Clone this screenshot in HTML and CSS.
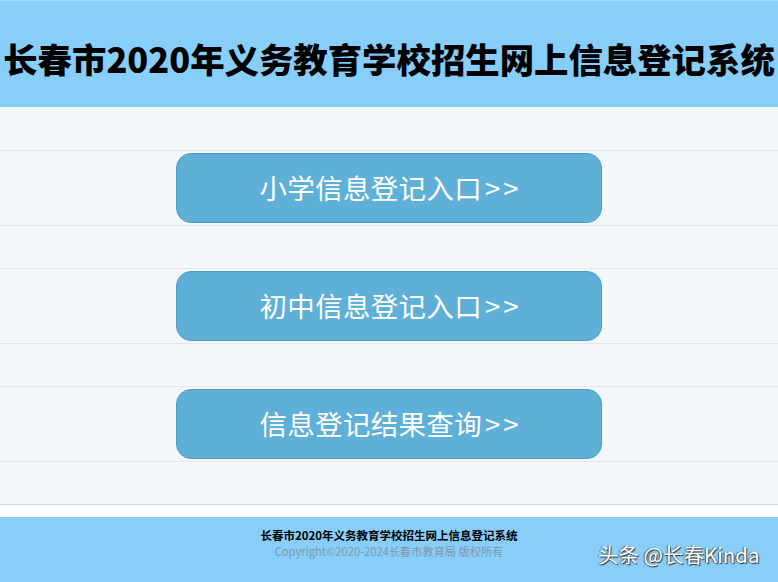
FILE: index.html
```html
<!DOCTYPE html>
<html lang="zh-CN">
<head>
<meta charset="utf-8">
<title>长春市2020年义务教育学校招生网上信息登记系统</title>
<link rel="stylesheet" href="styles.css">
</head>
<body>
<header class="header">
  <h1 class="title">长春市2020年义务教育学校招生网上信息登记系统</h1>
</header>
<main class="main">
  <div class="row"><a class="btn" href="#">小学信息登记入口<span class="arrows">&gt;&gt;</span></a></div>
  <div class="row"><a class="btn" href="#">初中信息登记入口<span class="arrows">&gt;&gt;</span></a></div>
  <div class="row"><a class="btn" href="#">信息登记结果查询<span class="arrows">&gt;&gt;</span></a></div>
</main>
<footer class="footer">
  <div class="foot-title">长春市2020年义务教育学校招生网上信息登记系统</div>
  <div class="foot-copy">Copyright©2020-2024长春市教育局 版权所有</div>
  <div class="watermark">头条 @长春Kinda</div>
</footer>
</body>
</html>
```
FILE: styles.css
```css
html, body {
  margin: 0;
  padding: 0;
  background: #ffffff;
  font-family: "Noto Sans CJK SC", "Noto Sans", sans-serif;
}
.header {
  height: 106px;
  border-top: 1px solid #a9dbf8;
  background: #87cefa;
  display: flex;
  align-items: center;
  justify-content: center;
}
.title {
  margin: 0;
  font-size: 34.4px;
  font-weight: 900;
  color: #000;
  white-space: nowrap;
  transform: translateY(4px);
}
.main {
  background: #f4f8fb;
  padding: 43px 0 42px;
  border-bottom: 1px solid #cfd4d8;
  margin-bottom: 12px;
  display: flex;
  flex-direction: column;
  gap: 42px;
}
.row {
  border-top: 1px solid #e1e6ea;
  border-bottom: 1px solid #e1e6ea;
  padding: 2px 0;
  display: flex;
  justify-content: center;
}
.btn {
  box-sizing: border-box;
  width: 426px;
  height: 70px;
  border: 1px solid #4d9cc6;
  border-radius: 15px;
  background: #5eb0d8;
  color: #ffffff;
  font-size: 27.5px;
  letter-spacing: 0.3px;
  text-decoration: none;
  display: flex;
  align-items: center;
  justify-content: center;
  padding-bottom: 2px;
}
.arrows {
  letter-spacing: 3px;
  margin-left: 3px;
  margin-right: -3px;
}
.footer {
  position: relative;
  background: #87cefa;
  height: 65px;
  padding-top: 10px;
  box-sizing: border-box;
  text-align: center;
}
.foot-title {
  font-size: 11.5px;
  font-weight: bold;
  color: #000;
  line-height: 16px;
}
.foot-copy {
  font-size: 11.2px;
  color: #8396a5;
  line-height: 16px;
}
.watermark {
  position: absolute;
  left: 598px;
  top: 22px;
  font-size: 20.5px;
  color: #ffffff;
  text-shadow: 1px 1px 1px #333, -1px 0 1px #555;
  white-space: nowrap;
}
```
